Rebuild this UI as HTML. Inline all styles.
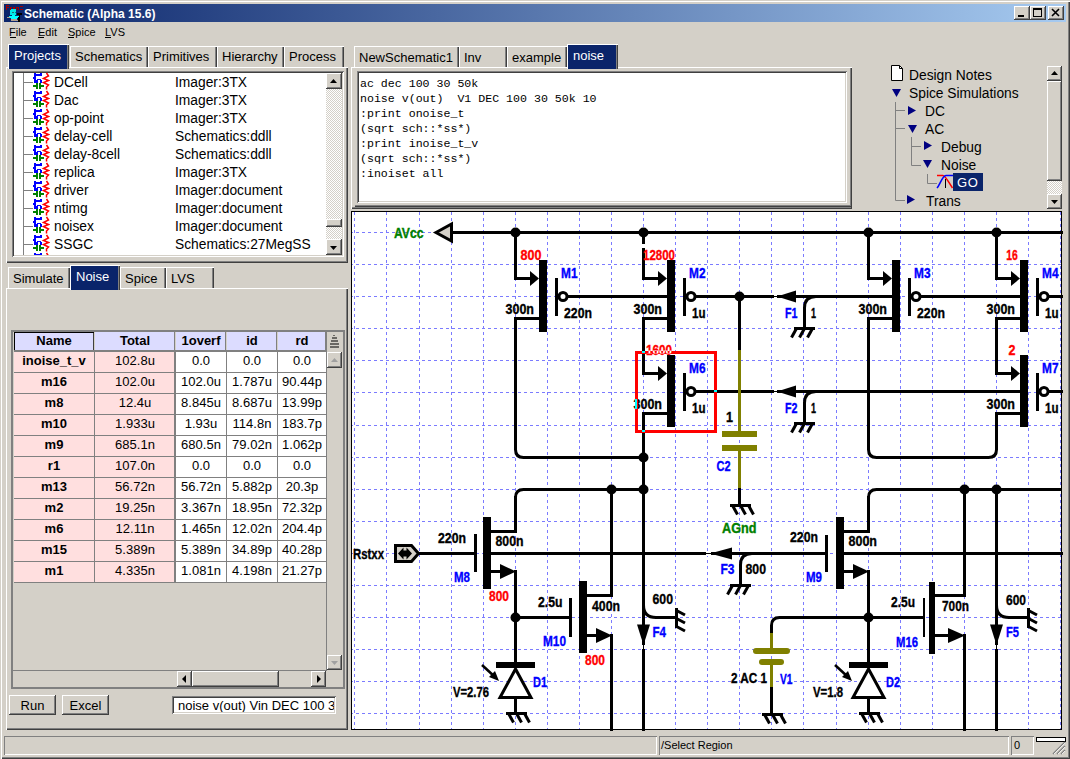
<!DOCTYPE html>
<html><head><meta charset="utf-8">
<style>
*{margin:0;padding:0;box-sizing:border-box;}
html,body{width:1070px;height:759px;overflow:hidden;background:#D4D0C8;font-family:"Liberation Sans",sans-serif;font-size:13px;color:#000;}
.a{position:absolute;}
.t{position:absolute;white-space:pre;line-height:1;}
.raised{background:#D4D0C8;box-shadow:inset -1px -1px #404040,inset 1px 1px #fff,inset -2px -2px #808080,inset 2px 2px #D4D0C8;}
.sunken{box-shadow:inset 1px 1px #808080,inset -1px -1px #fff,inset 2px 2px #404040,inset -2px -2px #D4D0C8;}
.thin-sunken{box-shadow:inset 1px 1px #808080,inset -1px -1px #fff;}
.panel{box-shadow:inset 1px 1px #fff,inset -1px -1px #404040,inset -2px -2px #808080;}
.tab{position:absolute;background:#D4D0C8;box-shadow:inset 1px 1px #fff,inset -1px 0 #404040,inset -2px 0 #808080;}
.tabsel{position:absolute;background:#0A246A;color:#fff;box-shadow:inset 1px 1px #fff,inset -1px 0 #404040,inset -2px 0 #808080;}
.check{background-color:#fff;background-image:linear-gradient(45deg,#D4D0C8 25%,transparent 25%,transparent 75%,#D4D0C8 75%),linear-gradient(45deg,#D4D0C8 25%,transparent 25%,transparent 75%,#D4D0C8 75%);background-size:2px 2px;background-position:0 0,1px 1px;}
</style></head><body>
<!-- window frame -->
<div class="a" style="left:0;top:0;width:1070px;height:759px;box-shadow:inset 1px 1px #D4D0C8,inset 2px 2px #fff,inset -1px -1px #404040,inset -2px -2px #808080;"></div>
<!-- title bar -->
<div class="a" style="left:4px;top:4px;width:1062px;height:18px;background:linear-gradient(to right,#0A246A,#A6CAF0);"></div>
<div class="t" style="left:24px;top:8px;color:#fff;font-weight:bold;font-size:12px;">Schematic (Alpha 15.6)</div>
<!-- title buttons -->
<div class="a raised" style="left:1014px;top:6px;width:16px;height:14px;"></div>
<div class="a raised" style="left:1030px;top:6px;width:16px;height:14px;"></div>
<div class="a raised" style="left:1048px;top:6px;width:16px;height:14px;"></div>

<!-- menu -->
<div class="t" style="left:9px;top:27px;font-size:11px;">File</div>
<div class="t" style="left:38px;top:27px;font-size:11px;">Edit</div>
<div class="t" style="left:68px;top:27px;font-size:11px;">Spice</div>
<div class="t" style="left:105px;top:27px;font-size:11px;">LVS</div>
<div class="a" style="left:10px;top:37px;width:6px;height:1px;background:#000"></div><div class="a" style="left:38px;top:37px;width:6px;height:1px;background:#000"></div><div class="a" style="left:68px;top:37px;width:6px;height:1px;background:#000"></div><div class="a" style="left:105px;top:37px;width:6px;height:1px;background:#000"></div>

<svg width="0" height="0" style="position:absolute"><defs><g id="ticon">
<path d="M2 1h2v1H2z M8 1h2v1H8z M2 2h8v2H2z M2 4h2v7H2z M1 5h1v2H1z M5 7h4v1H5z M4 8h2v3H4z M8 8h2v3H8z" fill="#0000FF" shape-rendering="crispEdges"/>
<path d="M1 13h3v2H1z M4 11h2v6H4z M7 11h2v6H7z M9 13h3v2H9z" fill="#008000" shape-rendering="crispEdges"/>
<path d="M14.5 1 L16.5 4 L11.5 6.5 L16.5 8.5 L11.5 10.5 L16.5 13 L14.5 15 V17.5" stroke="#FF0000" stroke-width="1.5" fill="none"/>
</g></defs></svg>
<!-- projects tabs -->
<div class="a panel" style="left:6px;top:67px;width:342px;height:196px;"></div>
<div class="tabsel" style="left:8px;top:44px;width:61px;height:25px;"></div><div class="t" style="left:14px;top:49px;color:#fff;">Projects</div>
<div class="tab" style="left:70px;top:46px;width:78px;height:21px;"></div><div class="t" style="left:75px;top:50px;">Schematics</div>
<div class="tab" style="left:148px;top:46px;width:69px;height:21px;"></div><div class="t" style="left:153px;top:50px;">Primitives</div>
<div class="tab" style="left:217px;top:46px;width:67px;height:21px;"></div><div class="t" style="left:222px;top:50px;">Hierarchy</div>
<div class="tab" style="left:284px;top:46px;width:60px;height:21px;"></div><div class="t" style="left:289px;top:50px;">Process</div>
<div class="a sunken" style="left:12px;top:71px;width:332px;height:186px;background:#fff;"></div>
<div class="a" style="left:23px;top:73px;width:1px;height:182px;background:#808080;"></div>
<div class="a" style="left:24px;top:82px;width:9px;height:1px;background:#808080;"></div>
<svg class="a" style="left:32px;top:72px;" width="18" height="18"><use href="#ticon"/></svg>
<div class="t" style="left:54px;top:76.2px;font-size:13.8px;">DCell</div><div class="t" style="left:175px;top:76.2px;font-size:13.8px;">Imager:3TX</div>
<div class="a" style="left:24px;top:100px;width:9px;height:1px;background:#808080;"></div>
<svg class="a" style="left:32px;top:90px;" width="18" height="18"><use href="#ticon"/></svg>
<div class="t" style="left:54px;top:94.2px;font-size:13.8px;">Dac</div><div class="t" style="left:175px;top:94.2px;font-size:13.8px;">Imager:3TX</div>
<div class="a" style="left:24px;top:118px;width:9px;height:1px;background:#808080;"></div>
<svg class="a" style="left:32px;top:108px;" width="18" height="18"><use href="#ticon"/></svg>
<div class="t" style="left:54px;top:112.2px;font-size:13.8px;">op-point</div><div class="t" style="left:175px;top:112.2px;font-size:13.8px;">Imager:3TX</div>
<div class="a" style="left:24px;top:136px;width:9px;height:1px;background:#808080;"></div>
<svg class="a" style="left:32px;top:126px;" width="18" height="18"><use href="#ticon"/></svg>
<div class="t" style="left:54px;top:130.2px;font-size:13.8px;">delay-cell</div><div class="t" style="left:175px;top:130.2px;font-size:13.8px;">Schematics:ddll</div>
<div class="a" style="left:24px;top:154px;width:9px;height:1px;background:#808080;"></div>
<svg class="a" style="left:32px;top:144px;" width="18" height="18"><use href="#ticon"/></svg>
<div class="t" style="left:54px;top:148.2px;font-size:13.8px;">delay-8cell</div><div class="t" style="left:175px;top:148.2px;font-size:13.8px;">Schematics:ddll</div>
<div class="a" style="left:24px;top:172px;width:9px;height:1px;background:#808080;"></div>
<svg class="a" style="left:32px;top:162px;" width="18" height="18"><use href="#ticon"/></svg>
<div class="t" style="left:54px;top:166.2px;font-size:13.8px;">replica</div><div class="t" style="left:175px;top:166.2px;font-size:13.8px;">Imager:3TX</div>
<div class="a" style="left:24px;top:190px;width:9px;height:1px;background:#808080;"></div>
<svg class="a" style="left:32px;top:180px;" width="18" height="18"><use href="#ticon"/></svg>
<div class="t" style="left:54px;top:184.2px;font-size:13.8px;">driver</div><div class="t" style="left:175px;top:184.2px;font-size:13.8px;">Imager:document</div>
<div class="a" style="left:24px;top:208px;width:9px;height:1px;background:#808080;"></div>
<svg class="a" style="left:32px;top:198px;" width="18" height="18"><use href="#ticon"/></svg>
<div class="t" style="left:54px;top:202.2px;font-size:13.8px;">ntimg</div><div class="t" style="left:175px;top:202.2px;font-size:13.8px;">Imager:document</div>
<div class="a" style="left:24px;top:226px;width:9px;height:1px;background:#808080;"></div>
<svg class="a" style="left:32px;top:216px;" width="18" height="18"><use href="#ticon"/></svg>
<div class="t" style="left:54px;top:220.2px;font-size:13.8px;">noisex</div><div class="t" style="left:175px;top:220.2px;font-size:13.8px;">Imager:document</div>
<div class="a" style="left:24px;top:244px;width:9px;height:1px;background:#808080;"></div>
<svg class="a" style="left:32px;top:234px;" width="18" height="18"><use href="#ticon"/></svg>
<div class="t" style="left:54px;top:238.2px;font-size:13.8px;">SSGC</div><div class="t" style="left:175px;top:238.2px;font-size:13.8px;">Schematics:27MegSS</div>
<svg class="a" style="left:32px;top:252px;" width="18" height="3"><use href="#ticon"/></svg>
<div class="a check" style="left:326px;top:73px;width:16px;height:182px;"></div>
<div class="a raised" style="left:326px;top:73px;width:16px;height:16px;"></div><svg class="a" style="left:326px;top:73px" width="16" height="16"><path d="M4 10h7l-3.5-4z" fill="#000"/></svg>
<div class="a raised" style="left:326px;top:219px;width:16px;height:8px;"></div>
<div class="a raised" style="left:326px;top:239px;width:16px;height:16px;"></div><svg class="a" style="left:326px;top:239px" width="16" height="16"><path d="M4 7h7l-3.5 4z" fill="#000"/></svg>
<!-- lower tabs -->
<div class="a panel" style="left:6px;top:288px;width:342px;height:442px;"></div>
<div class="tab" style="left:8px;top:267px;width:62px;height:21px;"></div><div class="t" style="left:13px;top:272px;">Simulate</div>
<div class="tabsel" style="left:70px;top:265px;width:50px;height:25px;"></div><div class="t" style="left:76px;top:270px;color:#fff;">Noise</div>
<div class="tab" style="left:120px;top:267px;width:46px;height:21px;"></div><div class="t" style="left:125px;top:272px;">Spice</div>
<div class="tab" style="left:166px;top:267px;width:48px;height:21px;"></div><div class="t" style="left:171px;top:272px;">LVS</div>
<div class="a" style="left:11px;top:330px;width:334px;height:359px;background:#D4D0C8;box-shadow:inset 2px 2px #808080,inset -2px -2px #808080;"></div>
<div class="a" style="left:14px;top:332px;width:80px;height:18px;background:#DCDCFF;box-shadow:inset 1px 1px #000,inset -1px 0 #404040;"></div>
<div class="t" style="left:14px;top:333.5px;width:80px;text-align:center;font-weight:bold;">Name</div>
<div class="a" style="left:95px;top:332px;width:80px;height:18px;background:#DCDCFF;box-shadow:inset -1px 0 #808080;"></div>
<div class="t" style="left:95px;top:333.5px;width:80px;text-align:center;font-weight:bold;">Total</div>
<div class="a" style="left:176px;top:332px;width:50px;height:18px;background:#DCDCFF;box-shadow:inset -1px 0 #808080;"></div>
<div class="t" style="left:176px;top:333.5px;width:50px;text-align:center;font-weight:bold;">1overf</div>
<div class="a" style="left:227px;top:332px;width:50px;height:18px;background:#DCDCFF;box-shadow:inset -1px 0 #808080;"></div>
<div class="t" style="left:227px;top:333.5px;width:50px;text-align:center;font-weight:bold;">id</div>
<div class="a" style="left:278px;top:332px;width:48px;height:18px;background:#DCDCFF;box-shadow:inset -1px 0 #808080;"></div>
<div class="t" style="left:278px;top:333.5px;width:48px;text-align:center;font-weight:bold;">rd</div>
<div class="a" style="left:14px;top:350px;width:312px;height:2px;background:#808080;"></div>
<div class="a" style="left:14px;top:352px;width:161px;height:20px;background:#FFDFDF;"></div>
<div class="a" style="left:175px;top:352px;width:151px;height:20px;background:#fff;"></div>
<div class="a" style="left:14px;top:372px;width:312px;height:1px;background:#808080;"></div>
<div class="t" style="left:14px;top:354px;width:80px;text-align:center;font-weight:bold;">inoise_t_v</div>
<div class="t" style="left:95px;top:354px;width:80px;text-align:center;">102.8u</div>
<div class="t" style="left:176px;top:354px;width:50px;text-align:center;">0.0</div>
<div class="t" style="left:227px;top:354px;width:50px;text-align:center;">0.0</div>
<div class="t" style="left:278px;top:354px;width:48px;text-align:center;">0.0</div>
<div class="a" style="left:14px;top:373px;width:161px;height:20px;background:#FFDFDF;"></div>
<div class="a" style="left:175px;top:373px;width:151px;height:20px;background:#fff;"></div>
<div class="a" style="left:14px;top:393px;width:312px;height:1px;background:#808080;"></div>
<div class="t" style="left:14px;top:375px;width:80px;text-align:center;font-weight:bold;">m16</div>
<div class="t" style="left:95px;top:375px;width:80px;text-align:center;">102.0u</div>
<div class="t" style="left:176px;top:375px;width:50px;text-align:center;">102.0u</div>
<div class="t" style="left:227px;top:375px;width:50px;text-align:center;">1.787u</div>
<div class="t" style="left:278px;top:375px;width:48px;text-align:center;">90.44p</div>
<div class="a" style="left:14px;top:394px;width:161px;height:20px;background:#FFDFDF;"></div>
<div class="a" style="left:175px;top:394px;width:151px;height:20px;background:#fff;"></div>
<div class="a" style="left:14px;top:414px;width:312px;height:1px;background:#808080;"></div>
<div class="t" style="left:14px;top:396px;width:80px;text-align:center;font-weight:bold;">m8</div>
<div class="t" style="left:95px;top:396px;width:80px;text-align:center;">12.4u</div>
<div class="t" style="left:176px;top:396px;width:50px;text-align:center;">8.845u</div>
<div class="t" style="left:227px;top:396px;width:50px;text-align:center;">8.687u</div>
<div class="t" style="left:278px;top:396px;width:48px;text-align:center;">13.99p</div>
<div class="a" style="left:14px;top:415px;width:161px;height:20px;background:#FFDFDF;"></div>
<div class="a" style="left:175px;top:415px;width:151px;height:20px;background:#fff;"></div>
<div class="a" style="left:14px;top:435px;width:312px;height:1px;background:#808080;"></div>
<div class="t" style="left:14px;top:417px;width:80px;text-align:center;font-weight:bold;">m10</div>
<div class="t" style="left:95px;top:417px;width:80px;text-align:center;">1.933u</div>
<div class="t" style="left:176px;top:417px;width:50px;text-align:center;">1.93u</div>
<div class="t" style="left:227px;top:417px;width:50px;text-align:center;">114.8n</div>
<div class="t" style="left:278px;top:417px;width:48px;text-align:center;">183.7p</div>
<div class="a" style="left:14px;top:436px;width:161px;height:20px;background:#FFDFDF;"></div>
<div class="a" style="left:175px;top:436px;width:151px;height:20px;background:#fff;"></div>
<div class="a" style="left:14px;top:456px;width:312px;height:1px;background:#808080;"></div>
<div class="t" style="left:14px;top:438px;width:80px;text-align:center;font-weight:bold;">m9</div>
<div class="t" style="left:95px;top:438px;width:80px;text-align:center;">685.1n</div>
<div class="t" style="left:176px;top:438px;width:50px;text-align:center;">680.5n</div>
<div class="t" style="left:227px;top:438px;width:50px;text-align:center;">79.02n</div>
<div class="t" style="left:278px;top:438px;width:48px;text-align:center;">1.062p</div>
<div class="a" style="left:14px;top:457px;width:161px;height:20px;background:#FFDFDF;"></div>
<div class="a" style="left:175px;top:457px;width:151px;height:20px;background:#fff;"></div>
<div class="a" style="left:14px;top:477px;width:312px;height:1px;background:#808080;"></div>
<div class="t" style="left:14px;top:459px;width:80px;text-align:center;font-weight:bold;">r1</div>
<div class="t" style="left:95px;top:459px;width:80px;text-align:center;">107.0n</div>
<div class="t" style="left:176px;top:459px;width:50px;text-align:center;">0.0</div>
<div class="t" style="left:227px;top:459px;width:50px;text-align:center;">0.0</div>
<div class="t" style="left:278px;top:459px;width:48px;text-align:center;">0.0</div>
<div class="a" style="left:14px;top:478px;width:161px;height:20px;background:#FFDFDF;"></div>
<div class="a" style="left:175px;top:478px;width:151px;height:20px;background:#fff;"></div>
<div class="a" style="left:14px;top:498px;width:312px;height:1px;background:#808080;"></div>
<div class="t" style="left:14px;top:480px;width:80px;text-align:center;font-weight:bold;">m13</div>
<div class="t" style="left:95px;top:480px;width:80px;text-align:center;">56.72n</div>
<div class="t" style="left:176px;top:480px;width:50px;text-align:center;">56.72n</div>
<div class="t" style="left:227px;top:480px;width:50px;text-align:center;">5.882p</div>
<div class="t" style="left:278px;top:480px;width:48px;text-align:center;">20.3p</div>
<div class="a" style="left:14px;top:499px;width:161px;height:20px;background:#FFDFDF;"></div>
<div class="a" style="left:175px;top:499px;width:151px;height:20px;background:#fff;"></div>
<div class="a" style="left:14px;top:519px;width:312px;height:1px;background:#808080;"></div>
<div class="t" style="left:14px;top:501px;width:80px;text-align:center;font-weight:bold;">m2</div>
<div class="t" style="left:95px;top:501px;width:80px;text-align:center;">19.25n</div>
<div class="t" style="left:176px;top:501px;width:50px;text-align:center;">3.367n</div>
<div class="t" style="left:227px;top:501px;width:50px;text-align:center;">18.95n</div>
<div class="t" style="left:278px;top:501px;width:48px;text-align:center;">72.32p</div>
<div class="a" style="left:14px;top:520px;width:161px;height:20px;background:#FFDFDF;"></div>
<div class="a" style="left:175px;top:520px;width:151px;height:20px;background:#fff;"></div>
<div class="a" style="left:14px;top:540px;width:312px;height:1px;background:#808080;"></div>
<div class="t" style="left:14px;top:522px;width:80px;text-align:center;font-weight:bold;">m6</div>
<div class="t" style="left:95px;top:522px;width:80px;text-align:center;">12.11n</div>
<div class="t" style="left:176px;top:522px;width:50px;text-align:center;">1.465n</div>
<div class="t" style="left:227px;top:522px;width:50px;text-align:center;">12.02n</div>
<div class="t" style="left:278px;top:522px;width:48px;text-align:center;">204.4p</div>
<div class="a" style="left:14px;top:541px;width:161px;height:20px;background:#FFDFDF;"></div>
<div class="a" style="left:175px;top:541px;width:151px;height:20px;background:#fff;"></div>
<div class="a" style="left:14px;top:561px;width:312px;height:1px;background:#808080;"></div>
<div class="t" style="left:14px;top:543px;width:80px;text-align:center;font-weight:bold;">m15</div>
<div class="t" style="left:95px;top:543px;width:80px;text-align:center;">5.389n</div>
<div class="t" style="left:176px;top:543px;width:50px;text-align:center;">5.389n</div>
<div class="t" style="left:227px;top:543px;width:50px;text-align:center;">34.89p</div>
<div class="t" style="left:278px;top:543px;width:48px;text-align:center;">40.28p</div>
<div class="a" style="left:14px;top:562px;width:161px;height:20px;background:#FFDFDF;"></div>
<div class="a" style="left:175px;top:562px;width:151px;height:20px;background:#fff;"></div>
<div class="a" style="left:14px;top:582px;width:312px;height:1px;background:#808080;"></div>
<div class="t" style="left:14px;top:564px;width:80px;text-align:center;font-weight:bold;">m1</div>
<div class="t" style="left:95px;top:564px;width:80px;text-align:center;">4.335n</div>
<div class="t" style="left:176px;top:564px;width:50px;text-align:center;">1.081n</div>
<div class="t" style="left:227px;top:564px;width:50px;text-align:center;">4.198n</div>
<div class="t" style="left:278px;top:564px;width:48px;text-align:center;">21.27p</div>
<div class="a" style="left:94px;top:352px;width:1px;height:230px;background:#808080;"></div>
<div class="a" style="left:174px;top:352px;width:1px;height:230px;background:#808080;"></div>
<div class="a" style="left:175px;top:352px;width:1px;height:230px;background:#808080;"></div>
<div class="a" style="left:226px;top:352px;width:1px;height:230px;background:#808080;"></div>
<div class="a" style="left:277px;top:352px;width:1px;height:230px;background:#808080;"></div>
<div class="a" style="left:326px;top:352px;width:1px;height:230px;background:#808080;"></div>
<div class="a" style="left:326px;top:332px;width:16px;height:339px;background:#D4D0C8;"></div>
<div class="a" style="left:326px;top:332px;width:1px;height:339px;background:#808080;"></div>
<svg class="a" style="left:327px;top:332px" width="15" height="18"><path d="M7 3v1M5 6h5M4 9h7M3 12h9M3 15h9" stroke="#000" stroke-width="1"/></svg>
<div class="a raised" style="left:327px;top:352px;width:15px;height:16px;"></div><svg class="a" style="left:327px;top:352px" width="15" height="16"><path d="M4 10h7l-3.5-4z" fill="#A0A0A0"/></svg>
<div class="a raised" style="left:327px;top:655px;width:15px;height:15px;"></div><svg class="a" style="left:327px;top:655px" width="15" height="15"><path d="M4 6h7l-3.5 4z" fill="#A0A0A0"/></svg>
<div class="a" style="left:13px;top:670px;width:314px;height:1px;background:#808080;"></div>
<div class="a raised" style="left:177px;top:671px;width:15px;height:16px;"></div><svg class="a" style="left:177px;top:671px" width="15" height="16"><path d="M9 4v8l-4-4z" fill="#000"/></svg>
<div class="a raised" style="left:192px;top:671px;width:87px;height:16px;"></div>
<div class="a raised" style="left:311px;top:671px;width:15px;height:16px;"></div><svg class="a" style="left:311px;top:671px" width="15" height="16"><path d="M6 4v8l4-4z" fill="#000"/></svg>
<div class="a raised" style="left:9px;top:695px;width:47px;height:20px;"></div><div class="t" style="left:9px;top:699px;width:47px;text-align:center;">Run</div>
<div class="a raised" style="left:62px;top:695px;width:47px;height:20px;"></div><div class="t" style="left:62px;top:699px;width:47px;text-align:center;">Excel</div>
<div class="a sunken" style="left:172px;top:696px;width:164px;height:18px;background:#fff;overflow:hidden;"><div class="t" style="left:6px;top:3px;">noise v(out) Vin DEC 100 3</div></div>
<div class="a sunken" style="left:172px;top:696px;width:164px;height:18px;"></div>
<svg class="a" style="left:4px;top:2px" width="20" height="20" shape-rendering="crispEdges">
<path d="M2 3h3v1H3v1h2v1H3v2H2z M6 5h1v3H6z M7 5h1v1H7z M9 5h2v3H9z M12 5h3v3h-1V6h-1v2h-1z M16 4h3v1h-1v1h-1v1h2v1h-3V7h1V6h1V5h-2z" fill="#A00000"/>
<path d="M7 7h5v1H7z M6 8h2v5H6z M8 8h4v5H8z" fill="#00E8E8"/>
<path d="M8 10h2v1H8z M11 10h1v1h-1z" fill="#207070"/>
<path d="M8 13h3v1H8z M5 14h10v2H5z M7 16h6v1H7z" fill="#00FFFF"/>
<path d="M3 15h3v1H3z M7 17h6v1H7z M7 18h7v1H7z" fill="#B0A090"/>
<path d="M13 11h5v2h-2v7h-2v-5h1v-2h-2z" fill="#000"/>
</svg>
<svg class="a" style="left:1014px;top:6px" width="50" height="14"><path d="M4 9h6v2H4z" fill="#000"/><path d="M19 2h9v9h-9z M20 4v6h7V4z" fill="#000" fill-rule="evenodd"/><path d="M38 3l7 7M45 3l-7 7" stroke="#000" stroke-width="1.6"/></svg>
<!-- right tabs -->
<div class="a" style="left:351px;top:67px;width:501px;height:142px;box-shadow:inset 1px 1px #fff,inset -1px -1px #404040,inset -2px -2px #808080;"></div>
<div class="tab" style="left:354px;top:46px;width:105px;height:21px;"></div><div class="t" style="left:359px;top:51px;">NewSchematic1</div>
<div class="tab" style="left:459px;top:46px;width:48px;height:21px;"></div><div class="t" style="left:464px;top:51px;">Inv</div>
<div class="tab" style="left:507px;top:46px;width:60px;height:21px;"></div><div class="t" style="left:512px;top:51px;">example</div>
<div class="tabsel" style="left:567px;top:44px;width:51px;height:25px;"></div><div class="t" style="left:573px;top:49px;color:#fff;">noise</div>
<div class="a sunken" style="left:357px;top:71px;width:490px;height:132px;background:#fff;"></div>
<div class="a" style="left:355px;top:69px;width:497px;height:138px;box-shadow:inset -1px -1px #404040,inset -2px -2px #808080;"></div>
<div class="t" style="left:360px;top:78px;font-family:'Liberation Mono',monospace;font-size:11.6px;">ac dec 100 30 50k</div>
<div class="t" style="left:360px;top:93px;font-family:'Liberation Mono',monospace;font-size:11.6px;">noise v(out)  V1 DEC 100 30 50k 10</div>
<div class="t" style="left:360px;top:108px;font-family:'Liberation Mono',monospace;font-size:11.6px;">:print onoise_t</div>
<div class="t" style="left:360px;top:123px;font-family:'Liberation Mono',monospace;font-size:11.6px;">(sqrt sch::*ss*)</div>
<div class="t" style="left:360px;top:138px;font-family:'Liberation Mono',monospace;font-size:11.6px;">:print inoise_t_v</div>
<div class="t" style="left:360px;top:153px;font-family:'Liberation Mono',monospace;font-size:11.6px;">(sqrt sch::*ss*)</div>
<div class="t" style="left:360px;top:168px;font-family:'Liberation Mono',monospace;font-size:11.6px;">:inoiset all</div>
<div class="t" style="left:909px;top:68px;font-size:13.8px;margin-top:0.6px;">Design Notes</div>
<div class="t" style="left:909px;top:86px;font-size:13.8px;margin-top:0.6px;">Spice Simulations</div>
<div class="t" style="left:925px;top:104px;font-size:13.8px;margin-top:0.6px;">DC</div>
<div class="t" style="left:925px;top:122px;font-size:13.8px;margin-top:0.6px;">AC</div>
<div class="t" style="left:941px;top:140px;font-size:13.8px;margin-top:0.6px;">Debug</div>
<div class="t" style="left:941px;top:158px;font-size:13.8px;margin-top:0.6px;">Noise</div>
<div class="a" style="left:953px;top:173px;width:30px;height:18px;background:#0A246A;"></div><div class="t" style="left:957px;top:176px;color:#fff;letter-spacing:0.6px;">GO</div>
<div class="t" style="left:926px;top:194px;font-size:13.8px;margin-top:0.6px;">Trans</div>
<svg class="a" style="left:880px;top:60px" width="110" height="150">
<path d="M11.5 5.5h8l3 3v12h-11z" fill="#fff" stroke="#000"/><path d="M19.5 5.5v3h3" fill="none" stroke="#000"/>
<path d="M12 29h9l-4.5 8z" fill="#000080"/>
<path d="M15.5 42v98.5H25 M15.5 50.5H25 M15.5 68.5H25" fill="none" stroke="#808080"/>
<path d="M28 46v9l8-4.5z" fill="#000080"/>
<path d="M28 65h9l-4.5 8z" fill="#000080"/>
<path d="M27 135v9l8-4.5z" fill="#000080"/>
<path d="M31.5 77v28.5H41 M31.5 86.5H41" fill="none" stroke="#808080"/>
<path d="M44 81v9l8-4.5z" fill="#000080"/>
<path d="M43 100h9l-4.5 8z" fill="#000080"/>
<path d="M47.5 114v9.5H57" fill="none" stroke="#808080"/>
<path d="M57 115.5h6c2 0 6 7 9.5 12.5" fill="none" stroke="#FF0000" stroke-width="1.6"/>
<path d="M57 128c3-3 5-12 9-12.5h7" fill="none" stroke="#0000FF" stroke-width="1.6"/>
<path d="M65.5 119v9" stroke="#000" stroke-width="1"/>
</svg>
<div class="a check" style="left:1047px;top:66px;width:15px;height:143px;"></div>
<div class="a raised" style="left:1047px;top:66px;width:15px;height:15px;"></div><svg class="a" style="left:1047px;top:66px" width="15" height="15"><path d="M4 9h7l-3.5-4z" fill="#000"/></svg>
<div class="a raised" style="left:1047px;top:81px;width:15px;height:100px;"></div>
<div class="a raised" style="left:1047px;top:194px;width:15px;height:15px;"></div><svg class="a" style="left:1047px;top:194px" width="15" height="15"><path d="M4 6h7l-3.5 4z" fill="#000"/></svg>
<div class="a" style="left:351px;top:211px;width:711px;height:519px;background:#fff;border:1px solid #000;"></div>
<svg id="sch" class="a" style="left:0;top:0" width="1070" height="759" font-family="Liberation Sans, sans-serif"><g><path d="M354.5 212V729 M386.5 212V729 M419.5 212V729 M451.5 212V729 M483.5 212V729 M515.5 212V729 M547.5 212V729 M579.5 212V729 M611.5 212V729 M643.5 212V729 M675.5 212V729 M707.5 212V729 M739.5 212V729 M771.5 212V729 M803.5 212V729 M836.5 212V729 M868.5 212V729 M900.5 212V729 M932.5 212V729 M964.5 212V729 M996.5 212V729 M1028.5 212V729 M1060.5 212V729" stroke="#7B7BFF" stroke-width="1" stroke-dasharray="3 3" fill="none" shape-rendering="crispEdges"/>
<path d="M352 232.5H1061 M352 264.5H1061 M352 296.5H1061 M352 328.5H1061 M352 360.5H1061 M352 392.5H1061 M352 425.5H1061 M352 457.5H1061 M352 489.5H1061 M352 521.5H1061 M352 553.5H1061 M352 585.5H1061 M352 617.5H1061 M352 649.5H1061 M352 681.5H1061 M352 713.5H1061" stroke="#7B7BFF" stroke-width="1" stroke-dasharray="3 3" stroke-dashoffset="2" fill="none" shape-rendering="crispEdges"/>
<path d="M452.5 232.5 L1061.5 232.5" stroke="#000" stroke-width="3" fill="none" stroke-linecap="square" shape-rendering="crispEdges"/>
<path d="M436 232.5 L451.5 224 L451.5 241 Z" fill="#D4D0C8" stroke="#000" stroke-width="3" stroke-linejoin="miter"/>
<text x="394" y="238" fill="#008000" stroke="#008000" stroke-width="0.35" font-weight="bold" font-size="14.5" textLength="29.5" lengthAdjust="spacingAndGlyphs">AVcc</text>
<path d="M515.5 232.5 L515.5 278.5" stroke="#000" stroke-width="3" fill="none" stroke-linecap="square" shape-rendering="crispEdges"/>
<path d="M515.5 318.5 L515.5 449.5 Q515.5 457.5 523.5 457.5 L643.5 457.5" stroke="#000" stroke-width="3" fill="none"/>
<path d="M567.5 296.5 L667.5 296.5" stroke="#000" stroke-width="3" fill="none" stroke-linecap="square" shape-rendering="crispEdges"/>
<path d="M643.5 232.5 L643.5 278.5" stroke="#000" stroke-width="3" fill="none" stroke-linecap="square" shape-rendering="crispEdges"/>
<rect x="641" y="244" width="5" height="4" fill="#fff" shape-rendering="crispEdges"/>
<path d="M643.5 318.5 L643.5 373.5" stroke="#000" stroke-width="3" fill="none" stroke-linecap="square" shape-rendering="crispEdges"/>
<path d="M695.5 296.5 L892.5 296.5" stroke="#000" stroke-width="3" fill="none" stroke-linecap="square" shape-rendering="crispEdges"/>
<path d="M868.5 232.5 L868.5 278.5" stroke="#000" stroke-width="3" fill="none" stroke-linecap="square" shape-rendering="crispEdges"/>
<path d="M868.5 318.5 L868.5 449.5 Q868.5 457.5 876.5 457.5 L988.5 457.5 Q996.5 457.5 996.5 449.5 L996.5 413.5" stroke="#000" stroke-width="3" fill="none"/>
<path d="M920.5 296.5 L1020.5 296.5" stroke="#000" stroke-width="3" fill="none" stroke-linecap="square" shape-rendering="crispEdges"/>
<path d="M996.5 232.5 L996.5 278.5" stroke="#000" stroke-width="3" fill="none" stroke-linecap="square" shape-rendering="crispEdges"/>
<path d="M996.5 318.5 L996.5 373.5" stroke="#000" stroke-width="3" fill="none" stroke-linecap="square" shape-rendering="crispEdges"/>
<path d="M1048.5 296.5 L1061.5 296.5" stroke="#000" stroke-width="3" fill="none" stroke-linecap="square" shape-rendering="crispEdges"/>
<path d="M643.5 413.5 L643.5 729.5" stroke="#000" stroke-width="3" fill="none" stroke-linecap="square" shape-rendering="crispEdges"/>
<path d="M695.5 391.5 L1020.5 391.5" stroke="#000" stroke-width="3" fill="none" stroke-linecap="square" shape-rendering="crispEdges"/>
<path d="M1020.5 413.5 L996.5 413.5" stroke="#000" stroke-width="3" fill="none" stroke-linecap="square" shape-rendering="crispEdges"/>
<path d="M1048.5 391.5 L1061.5 391.5" stroke="#000" stroke-width="3" fill="none" stroke-linecap="square" shape-rendering="crispEdges"/>
<circle cx="515.5" cy="232.5" r="5" fill="#000"/>
<circle cx="643.5" cy="232.5" r="5" fill="#000"/>
<circle cx="868.5" cy="232.5" r="5" fill="#000"/>
<circle cx="996.5" cy="232.5" r="5" fill="#000"/>
<circle cx="739.5" cy="296.5" r="5" fill="#000"/>
<path d="M515.5 278.5 L530.5 278.5" stroke="#000" stroke-width="3" fill="none" stroke-linecap="square" shape-rendering="crispEdges"/>
<path d="M530 271 L530 286 L539 278.5 Z" fill="#000"/>
<path d="M539.5 318.5 L515.5 318.5" stroke="#000" stroke-width="3" fill="none" stroke-linecap="square" shape-rendering="crispEdges"/>
<rect x="539" y="260" width="8" height="72" fill="#000" shape-rendering="crispEdges"/>
<rect x="555" y="278" width="3" height="38" fill="#000" shape-rendering="crispEdges"/>
<circle cx="563" cy="296.5" r="4" fill="#fff" stroke="#000" stroke-width="3"/>
<text x="520.5" y="259.5" fill="#FF0000" stroke="#FF0000" stroke-width="0.35" font-weight="bold" font-size="14.5" textLength="21" lengthAdjust="spacingAndGlyphs">800</text>
<text x="561" y="277.5" fill="#0000FF" stroke="#0000FF" stroke-width="0.35" font-weight="bold" font-size="14.5" textLength="16.5" lengthAdjust="spacingAndGlyphs">M1</text>
<text x="505.5" y="314" fill="#000" stroke="#000" stroke-width="0.35" font-weight="bold" font-size="14.5" textLength="28.5" lengthAdjust="spacingAndGlyphs">300n</text>
<text x="564" y="317.5" fill="#000" stroke="#000" stroke-width="0.35" font-weight="bold" font-size="14.5" textLength="28" lengthAdjust="spacingAndGlyphs">220n</text>
<path d="M643.5 278.5 L658.5 278.5" stroke="#000" stroke-width="3" fill="none" stroke-linecap="square" shape-rendering="crispEdges"/>
<path d="M658 271 L658 286 L667 278.5 Z" fill="#000"/>
<path d="M667.5 318.5 L643.5 318.5" stroke="#000" stroke-width="3" fill="none" stroke-linecap="square" shape-rendering="crispEdges"/>
<rect x="667" y="260" width="8" height="72" fill="#000" shape-rendering="crispEdges"/>
<rect x="683" y="278" width="3" height="38" fill="#000" shape-rendering="crispEdges"/>
<circle cx="691" cy="296.5" r="4" fill="#fff" stroke="#000" stroke-width="3"/>
<text x="643.0" y="259.5" fill="#FF0000" stroke="#FF0000" stroke-width="0.35" font-weight="bold" font-size="14.5" textLength="32" lengthAdjust="spacingAndGlyphs">12800</text>
<text x="689" y="277.5" fill="#0000FF" stroke="#0000FF" stroke-width="0.35" font-weight="bold" font-size="14.5" textLength="16.5" lengthAdjust="spacingAndGlyphs">M2</text>
<text x="633.5" y="314" fill="#000" stroke="#000" stroke-width="0.35" font-weight="bold" font-size="14.5" textLength="28.5" lengthAdjust="spacingAndGlyphs">300n</text>
<text x="692" y="317.5" fill="#000" stroke="#000" stroke-width="0.35" font-weight="bold" font-size="14.5" textLength="13.5" lengthAdjust="spacingAndGlyphs">1u</text>
<path d="M868.5 278.5 L883.5 278.5" stroke="#000" stroke-width="3" fill="none" stroke-linecap="square" shape-rendering="crispEdges"/>
<path d="M883 271 L883 286 L892 278.5 Z" fill="#000"/>
<path d="M892.5 318.5 L868.5 318.5" stroke="#000" stroke-width="3" fill="none" stroke-linecap="square" shape-rendering="crispEdges"/>
<rect x="892" y="260" width="8" height="72" fill="#000" shape-rendering="crispEdges"/>
<rect x="908" y="278" width="3" height="38" fill="#000" shape-rendering="crispEdges"/>
<circle cx="916" cy="296.5" r="4" fill="#fff" stroke="#000" stroke-width="3"/>
<text x="884.0" y="259.5" fill="#FF0000" stroke="#FF0000" stroke-width="0.35" font-weight="bold" font-size="14.5"></text>
<text x="914" y="277.5" fill="#0000FF" stroke="#0000FF" stroke-width="0.35" font-weight="bold" font-size="14.5" textLength="16.5" lengthAdjust="spacingAndGlyphs">M3</text>
<text x="858.5" y="314" fill="#000" stroke="#000" stroke-width="0.35" font-weight="bold" font-size="14.5" textLength="28.5" lengthAdjust="spacingAndGlyphs">300n</text>
<text x="917" y="317.5" fill="#000" stroke="#000" stroke-width="0.35" font-weight="bold" font-size="14.5" textLength="28" lengthAdjust="spacingAndGlyphs">220n</text>
<path d="M996.5 278.5 L1011.5 278.5" stroke="#000" stroke-width="3" fill="none" stroke-linecap="square" shape-rendering="crispEdges"/>
<path d="M1011 271 L1011 286 L1020 278.5 Z" fill="#000"/>
<path d="M1020.5 318.5 L996.5 318.5" stroke="#000" stroke-width="3" fill="none" stroke-linecap="square" shape-rendering="crispEdges"/>
<rect x="1020" y="260" width="8" height="72" fill="#000" shape-rendering="crispEdges"/>
<rect x="1036" y="278" width="3" height="38" fill="#000" shape-rendering="crispEdges"/>
<circle cx="1044" cy="296.5" r="4" fill="#fff" stroke="#000" stroke-width="3"/>
<text x="1006.25" y="259.5" fill="#FF0000" stroke="#FF0000" stroke-width="0.35" font-weight="bold" font-size="14.5" textLength="11.5" lengthAdjust="spacingAndGlyphs">16</text>
<text x="1042" y="277.5" fill="#0000FF" stroke="#0000FF" stroke-width="0.35" font-weight="bold" font-size="14.5" textLength="16.5" lengthAdjust="spacingAndGlyphs">M4</text>
<text x="986.5" y="314" fill="#000" stroke="#000" stroke-width="0.35" font-weight="bold" font-size="14.5" textLength="28.5" lengthAdjust="spacingAndGlyphs">300n</text>
<text x="1045" y="317.5" fill="#000" stroke="#000" stroke-width="0.35" font-weight="bold" font-size="14.5" textLength="13.5" lengthAdjust="spacingAndGlyphs">1u</text>
<path d="M643.5 373.5 L658.5 373.5" stroke="#000" stroke-width="3" fill="none" stroke-linecap="square" shape-rendering="crispEdges"/>
<path d="M658 366 L658 381 L667 373.5 Z" fill="#000"/>
<path d="M667.5 413.5 L643.5 413.5" stroke="#000" stroke-width="3" fill="none" stroke-linecap="square" shape-rendering="crispEdges"/>
<rect x="667" y="355" width="8" height="72" fill="#000" shape-rendering="crispEdges"/>
<rect x="683" y="373" width="3" height="38" fill="#000" shape-rendering="crispEdges"/>
<circle cx="691" cy="391.5" r="4" fill="#fff" stroke="#000" stroke-width="3"/>
<text x="646.0" y="354.5" fill="#FF0000" stroke="#FF0000" stroke-width="0.35" font-weight="bold" font-size="14.5" textLength="26" lengthAdjust="spacingAndGlyphs">1600</text>
<text x="689" y="372.5" fill="#0000FF" stroke="#0000FF" stroke-width="0.35" font-weight="bold" font-size="14.5" textLength="16.5" lengthAdjust="spacingAndGlyphs">M6</text>
<text x="633.5" y="409" fill="#000" stroke="#000" stroke-width="0.35" font-weight="bold" font-size="14.5" textLength="28.5" lengthAdjust="spacingAndGlyphs">300n</text>
<text x="692" y="412.5" fill="#000" stroke="#000" stroke-width="0.35" font-weight="bold" font-size="14.5" textLength="13.5" lengthAdjust="spacingAndGlyphs">1u</text>
<path d="M996.5 373.5 L1011.5 373.5" stroke="#000" stroke-width="3" fill="none" stroke-linecap="square" shape-rendering="crispEdges"/>
<path d="M1011 366 L1011 381 L1020 373.5 Z" fill="#000"/>
<path d="M1020.5 413.5 L996.5 413.5" stroke="#000" stroke-width="3" fill="none" stroke-linecap="square" shape-rendering="crispEdges"/>
<rect x="1020" y="355" width="8" height="72" fill="#000" shape-rendering="crispEdges"/>
<rect x="1036" y="373" width="3" height="38" fill="#000" shape-rendering="crispEdges"/>
<circle cx="1044" cy="391.5" r="4" fill="#fff" stroke="#000" stroke-width="3"/>
<text x="1008.5" y="354.5" fill="#FF0000" stroke="#FF0000" stroke-width="0.35" font-weight="bold" font-size="14.5" textLength="7" lengthAdjust="spacingAndGlyphs">2</text>
<text x="1042" y="372.5" fill="#0000FF" stroke="#0000FF" stroke-width="0.35" font-weight="bold" font-size="14.5" textLength="16.5" lengthAdjust="spacingAndGlyphs">M7</text>
<text x="986.5" y="409" fill="#000" stroke="#000" stroke-width="0.35" font-weight="bold" font-size="14.5" textLength="28.5" lengthAdjust="spacingAndGlyphs">300n</text>
<text x="1045" y="412.5" fill="#000" stroke="#000" stroke-width="0.35" font-weight="bold" font-size="14.5" textLength="13.5" lengthAdjust="spacingAndGlyphs">1u</text>
<path d="M739.5 296.5 L739.5 351.5" stroke="#000" stroke-width="3" fill="none" stroke-linecap="square" shape-rendering="crispEdges"/>
<path d="M739.5 351.5 L739.5 432.5" stroke="#808000" stroke-width="3" fill="none" stroke-linecap="square" shape-rendering="crispEdges"/>
<rect x="722" y="431" width="35" height="6" fill="#808000" shape-rendering="crispEdges"/>
<rect x="722" y="445" width="35" height="6" fill="#808000" shape-rendering="crispEdges"/>
<path d="M739.5 451.5 L739.5 489.5" stroke="#808000" stroke-width="3" fill="none" stroke-linecap="square" shape-rendering="crispEdges"/>
<path d="M739.5 489.5 L739.5 505.5" stroke="#000" stroke-width="3" fill="none" stroke-linecap="square" shape-rendering="crispEdges"/>
<text x="726" y="422" fill="#000" stroke="#000" stroke-width="0.35" font-weight="bold" font-size="14.5" textLength="7" lengthAdjust="spacingAndGlyphs">1</text>
<text x="716.5" y="470.5" fill="#0000FF" stroke="#0000FF" stroke-width="0.35" font-weight="bold" font-size="14.5" textLength="14" lengthAdjust="spacingAndGlyphs">C2</text>
<text x="722" y="532.5" fill="#008000" stroke="#008000" stroke-width="0.35" font-weight="bold" font-size="14.5" textLength="34.5" lengthAdjust="spacingAndGlyphs">AGnd</text>
<path d="M731.5 505.5 L749.5 505.5" stroke="#000" stroke-width="3" fill="none" stroke-linecap="square" shape-rendering="crispEdges"/>
<path d="M732.5 505.5 L737.5 514.5" stroke="#000" stroke-width="3" fill="none"/>
<path d="M740.5 505.5 L745.5 514.5" stroke="#000" stroke-width="3" fill="none"/>
<path d="M748.5 505.5 L753.5 514.5" stroke="#000" stroke-width="3" fill="none"/>
<rect x="774" y="295" width="3" height="3" fill="#fff" shape-rendering="crispEdges"/>
<rect x="774" y="296" width="4" height="1" fill="#000" shape-rendering="crispEdges"/>
<path d="M777 296.5 L796 290.5 L796 302.5 Z" fill="#000"/>
<path d="M816 296.5 Q804.5 296.5 804.5 308" stroke="#000" stroke-width="3" fill="none"/>
<path d="M804.5 308.5 L804.5 328.5" stroke="#000" stroke-width="3" fill="none" stroke-linecap="square" shape-rendering="crispEdges"/>
<path d="M795.5 328.5 L813.5 328.5" stroke="#000" stroke-width="3" fill="none" stroke-linecap="square" shape-rendering="crispEdges"/>
<path d="M796.5 328.5 L791.5 337.5" stroke="#000" stroke-width="3" fill="none"/>
<path d="M804.5 328.5 L799.5 337.5" stroke="#000" stroke-width="3" fill="none"/>
<path d="M812.5 328.5 L807.5 337.5" stroke="#000" stroke-width="3" fill="none"/>
<text x="785" y="317.5" fill="#0000FF" stroke="#0000FF" stroke-width="0.35" font-weight="bold" font-size="14.5" textLength="12.5" lengthAdjust="spacingAndGlyphs">F1</text>
<text x="811" y="317.5" fill="#000" stroke="#000" stroke-width="0.35" font-weight="bold" font-size="14.5" textLength="5" lengthAdjust="spacingAndGlyphs">1</text>
<rect x="774" y="390" width="3" height="3" fill="#fff" shape-rendering="crispEdges"/>
<rect x="774" y="391" width="4" height="1" fill="#000" shape-rendering="crispEdges"/>
<path d="M777 391.5 L796 385.5 L796 397.5 Z" fill="#000"/>
<path d="M816 391.5 Q804.5 391.5 804.5 403" stroke="#000" stroke-width="3" fill="none"/>
<path d="M804.5 403.5 L804.5 423.5" stroke="#000" stroke-width="3" fill="none" stroke-linecap="square" shape-rendering="crispEdges"/>
<path d="M795.5 423.5 L813.5 423.5" stroke="#000" stroke-width="3" fill="none" stroke-linecap="square" shape-rendering="crispEdges"/>
<path d="M796.5 423.5 L791.5 432.5" stroke="#000" stroke-width="3" fill="none"/>
<path d="M804.5 423.5 L799.5 432.5" stroke="#000" stroke-width="3" fill="none"/>
<path d="M812.5 423.5 L807.5 432.5" stroke="#000" stroke-width="3" fill="none"/>
<text x="785" y="412.5" fill="#0000FF" stroke="#0000FF" stroke-width="0.35" font-weight="bold" font-size="14.5" textLength="12.5" lengthAdjust="spacingAndGlyphs">F2</text>
<text x="811" y="412.5" fill="#000" stroke="#000" stroke-width="0.35" font-weight="bold" font-size="14.5" textLength="5" lengthAdjust="spacingAndGlyphs">1</text>
<path d="M491.5 531.5 L515.5 531.5 L515.5 497.5" stroke="#000" stroke-width="3" fill="none" stroke-linecap="square" shape-rendering="crispEdges"/>
<path d="M515.5 497.5 L515.5 497.5 Q515.5 489.5 523.5 489.5 L643.5 489.5" stroke="#000" stroke-width="3" fill="none"/>
<circle cx="611.5" cy="489.5" r="5" fill="#000"/>
<circle cx="643.5" cy="489.5" r="5" fill="#000"/>
<circle cx="643.5" cy="457.5" r="5" fill="#000"/>
<path d="M395.5 545.5 H411.5 L418.5 553.5 L411.5 561.5 H395.5 Z" fill="#D4D0C8" stroke="#000" stroke-width="3"/>
<path d="M398 553.5 L403.5 547.5 V550.5 H406.5 V547.5 L412 553.5 L406.5 559.5 V556.5 H403.5 V559.5 Z" fill="#000"/>
<text x="353" y="559" fill="#000" stroke="#000" stroke-width="0.35" font-weight="bold" font-size="14.5" textLength="31" lengthAdjust="spacingAndGlyphs">Rstxx</text>
<path d="M419.5 553.5 L474.5 553.5" stroke="#000" stroke-width="3" fill="none" stroke-linecap="square" shape-rendering="crispEdges"/>
<path d="M491.5 553.5 L825.5 553.5" stroke="#000" stroke-width="3" fill="none" stroke-linecap="square" shape-rendering="crispEdges"/>
<path d="M844.5 553.5 L1061.5 553.5" stroke="#000" stroke-width="3" fill="none" stroke-linecap="square" shape-rendering="crispEdges"/>
<rect x="483" y="517" width="8" height="72" fill="#000" shape-rendering="crispEdges"/>
<rect x="474" y="534" width="3" height="38" fill="#000" shape-rendering="crispEdges"/>
<path d="M491.5 531.5 L515.5 531.5" stroke="#000" stroke-width="3" fill="none" stroke-linecap="square" shape-rendering="crispEdges"/>
<path d="M491.5 571.5 L500.5 571.5" stroke="#000" stroke-width="3" fill="none" stroke-linecap="square" shape-rendering="crispEdges"/>
<path d="M500 564 L500 579 L516 571.5 Z" fill="#000"/>
<path d="M515.5 571.5 L515.5 662.5" stroke="#000" stroke-width="3" fill="none" stroke-linecap="square" shape-rendering="crispEdges"/>
<text x="438" y="542.5" fill="#000" stroke="#000" stroke-width="0.35" font-weight="bold" font-size="14.5" textLength="28" lengthAdjust="spacingAndGlyphs">220n</text>
<text x="495.5" y="546" fill="#000" stroke="#000" stroke-width="0.35" font-weight="bold" font-size="14.5" textLength="28" lengthAdjust="spacingAndGlyphs">800n</text>
<text x="454" y="582" fill="#0000FF" stroke="#0000FF" stroke-width="0.35" font-weight="bold" font-size="14.5" textLength="16" lengthAdjust="spacingAndGlyphs">M8</text>
<text x="489" y="601" fill="#FF0000" stroke="#FF0000" stroke-width="0.35" font-weight="bold" font-size="14.5" textLength="20" lengthAdjust="spacingAndGlyphs">800</text>
<circle cx="515.5" cy="617.5" r="5" fill="#000"/>
<path d="M515.5 617.5 L569.5 617.5" stroke="#000" stroke-width="3" fill="none" stroke-linecap="square" shape-rendering="crispEdges"/>
<rect x="579" y="581" width="8" height="72" fill="#000" shape-rendering="crispEdges"/>
<rect x="569" y="598" width="3" height="39" fill="#000" shape-rendering="crispEdges"/>
<path d="M587.5 595.5 L611.5 595.5" stroke="#000" stroke-width="3" fill="none" stroke-linecap="square" shape-rendering="crispEdges"/>
<path d="M587.5 635.5 L596.5 635.5" stroke="#000" stroke-width="3" fill="none" stroke-linecap="square" shape-rendering="crispEdges"/>
<path d="M596 628 L596 643 L612 635.5 Z" fill="#000"/>
<path d="M611.5 595.5 L611.5 489.5" stroke="#000" stroke-width="3" fill="none"/>
<path d="M611.5 635.5 L611.5 729.5" stroke="#000" stroke-width="3" fill="none" stroke-linecap="square" shape-rendering="crispEdges"/>
<text x="538" y="606.5" fill="#000" stroke="#000" stroke-width="0.35" font-weight="bold" font-size="14.5" textLength="24.5" lengthAdjust="spacingAndGlyphs">2.5u</text>
<text x="592" y="610.5" fill="#000" stroke="#000" stroke-width="0.35" font-weight="bold" font-size="14.5" textLength="28" lengthAdjust="spacingAndGlyphs">400n</text>
<text x="543" y="646" fill="#0000FF" stroke="#0000FF" stroke-width="0.35" font-weight="bold" font-size="14.5" textLength="23" lengthAdjust="spacingAndGlyphs">M10</text>
<text x="585" y="664.5" fill="#FF0000" stroke="#FF0000" stroke-width="0.35" font-weight="bold" font-size="14.5" textLength="20" lengthAdjust="spacingAndGlyphs">800</text>
<rect x="496" y="662" width="39" height="6" fill="#000" shape-rendering="crispEdges"/>
<path d="M515.5 669 L500 697.5 L531 697.5 Z" fill="#fff" stroke="#000" stroke-width="3" stroke-linejoin="miter"/>
<path d="M515.5 699.5 L515.5 713.5" stroke="#000" stroke-width="3" fill="none" stroke-linecap="square" shape-rendering="crispEdges"/>
<path d="M507.5 713.5 L525.5 713.5" stroke="#000" stroke-width="3" fill="none" stroke-linecap="square" shape-rendering="crispEdges"/>
<path d="M508.5 713.5 L513.5 722.5" stroke="#000" stroke-width="3" fill="none"/>
<path d="M516.5 713.5 L521.5 722.5" stroke="#000" stroke-width="3" fill="none"/>
<path d="M524.5 713.5 L529.5 722.5" stroke="#000" stroke-width="3" fill="none"/>
<path d="M482 665 L495 677" stroke="#000" stroke-width="2.5" fill="none"/>
<path d="M499 681 L489 677 L495 671 Z" fill="#000"/>
<text x="533" y="686.5" fill="#0000FF" stroke="#0000FF" stroke-width="0.35" font-weight="bold" font-size="14.5" textLength="14" lengthAdjust="spacingAndGlyphs">D1</text>
<text x="453" y="696.5" fill="#000" stroke="#000" stroke-width="0.35" font-weight="bold" font-size="14.5" textLength="36" lengthAdjust="spacingAndGlyphs">V=2.76</text>
<rect x="706" y="551" width="5" height="5" fill="#fff" shape-rendering="crispEdges"/>
<rect x="706" y="553" width="5" height="1" fill="#000" shape-rendering="crispEdges"/>
<path d="M710 553.5 L732 547.5 L732 559.5 Z" fill="#000"/>
<path d="M752 553.5 Q740.5 553.5 740.5 565" stroke="#000" stroke-width="3" fill="none"/>
<path d="M740.5 565.5 L740.5 585.5" stroke="#000" stroke-width="3" fill="none" stroke-linecap="square" shape-rendering="crispEdges"/>
<path d="M731.5 585.5 L749.5 585.5" stroke="#000" stroke-width="3" fill="none" stroke-linecap="square" shape-rendering="crispEdges"/>
<path d="M732.5 585.5 L727.5 594.5" stroke="#000" stroke-width="3" fill="none"/>
<path d="M740.5 585.5 L735.5 594.5" stroke="#000" stroke-width="3" fill="none"/>
<path d="M748.5 585.5 L743.5 594.5" stroke="#000" stroke-width="3" fill="none"/>
<text x="720.5" y="574" fill="#0000FF" stroke="#0000FF" stroke-width="0.35" font-weight="bold" font-size="14.5" textLength="14" lengthAdjust="spacingAndGlyphs">F3</text>
<text x="745.5" y="574" fill="#000" stroke="#000" stroke-width="0.35" font-weight="bold" font-size="14.5" textLength="20.5" lengthAdjust="spacingAndGlyphs">800</text>
<rect x="642" y="645" width="3" height="4" fill="#fff" shape-rendering="crispEdges"/>
<rect x="643" y="645" width="1" height="4" fill="#000" shape-rendering="crispEdges"/>
<path d="M637 624.5 L650 624.5 L643.5 645 Z" fill="#000"/>
<path d="M643.5 605 Q643.5 617.5 656 617.5" stroke="#000" stroke-width="3" fill="none"/>
<path d="M656.5 617.5 L676.5 617.5" stroke="#000" stroke-width="3" fill="none" stroke-linecap="square" shape-rendering="crispEdges"/>
<path d="M676.5 609.5 L676.5 626.5" stroke="#000" stroke-width="3" fill="none" stroke-linecap="square" shape-rendering="crispEdges"/>
<path d="M676.5 610.5 L685 615.0" stroke="#000" stroke-width="3" fill="none"/>
<path d="M676.5 618.5 L685 623.0" stroke="#000" stroke-width="3" fill="none"/>
<path d="M676.5 626.5 L685 631.0" stroke="#000" stroke-width="3" fill="none"/>
<text x="652.5" y="604" fill="#000" stroke="#000" stroke-width="0.35" font-weight="bold" font-size="14.5" textLength="20.5" lengthAdjust="spacingAndGlyphs">600</text>
<text x="652.5" y="636.5" fill="#0000FF" stroke="#0000FF" stroke-width="0.35" font-weight="bold" font-size="14.5" textLength="13.5" lengthAdjust="spacingAndGlyphs">F4</text>
<rect x="836" y="517" width="8" height="72" fill="#000" shape-rendering="crispEdges"/>
<rect x="825" y="535" width="3" height="37" fill="#000" shape-rendering="crispEdges"/>
<path d="M844.5 531.5 L868.5 531.5" stroke="#000" stroke-width="3" fill="none" stroke-linecap="square" shape-rendering="crispEdges"/>
<path d="M844.5 571.5 L853.5 571.5" stroke="#000" stroke-width="3" fill="none" stroke-linecap="square" shape-rendering="crispEdges"/>
<path d="M853 564 L853 579 L869 571.5 Z" fill="#000"/>
<path d="M844.5 531.5 L868.5 531.5 L868.5 497.5" stroke="#000" stroke-width="3" fill="none" stroke-linecap="square" shape-rendering="crispEdges"/>
<path d="M868.5 497.5 L868.5 497.5 Q868.5 489.5 876.5 489.5 L1061.5 489.5" stroke="#000" stroke-width="3" fill="none"/>
<path d="M868.5 571.5 L868.5 662.5" stroke="#000" stroke-width="3" fill="none" stroke-linecap="square" shape-rendering="crispEdges"/>
<circle cx="964.5" cy="489.5" r="5" fill="#000"/>
<circle cx="996.5" cy="489.5" r="5" fill="#000"/>
<text x="790" y="542" fill="#000" stroke="#000" stroke-width="0.35" font-weight="bold" font-size="14.5" textLength="28" lengthAdjust="spacingAndGlyphs">220n</text>
<text x="848.5" y="546" fill="#000" stroke="#000" stroke-width="0.35" font-weight="bold" font-size="14.5" textLength="28.5" lengthAdjust="spacingAndGlyphs">800n</text>
<text x="806" y="582" fill="#0000FF" stroke="#0000FF" stroke-width="0.35" font-weight="bold" font-size="14.5" textLength="16" lengthAdjust="spacingAndGlyphs">M9</text>
<path d="M923.5 617.5 L779.5 617.5 Q771.5 617.5 771.5 625.5 L771.5 634.5" stroke="#000" stroke-width="3" fill="none"/>
<path d="M771.5 634.5 L771.5 650.5" stroke="#808000" stroke-width="3" fill="none" stroke-linecap="square" shape-rendering="crispEdges"/>
<rect x="753" y="648" width="37" height="6" rx="3" fill="#808000"/>
<rect x="759" y="659" width="25" height="6" rx="3" fill="#808000"/>
<path d="M771.5 665.5 L771.5 688.5" stroke="#808000" stroke-width="3" fill="none" stroke-linecap="square" shape-rendering="crispEdges"/>
<path d="M771.5 688.5 L771.5 714.5" stroke="#000" stroke-width="3" fill="none" stroke-linecap="square" shape-rendering="crispEdges"/>
<path d="M763.5 714.5 L781.5 714.5" stroke="#000" stroke-width="3" fill="none" stroke-linecap="square" shape-rendering="crispEdges"/>
<path d="M764.5 714.5 L769.5 723.5" stroke="#000" stroke-width="3" fill="none"/>
<path d="M772.5 714.5 L777.5 723.5" stroke="#000" stroke-width="3" fill="none"/>
<path d="M780.5 714.5 L785.5 723.5" stroke="#000" stroke-width="3" fill="none"/>
<text x="731" y="683" fill="#000" stroke="#000" stroke-width="0.35" font-weight="bold" font-size="14.5" textLength="36" lengthAdjust="spacingAndGlyphs">2 AC 1</text>
<text x="780" y="684" fill="#0000FF" stroke="#0000FF" stroke-width="0.35" font-weight="bold" font-size="14.5" textLength="12.5" lengthAdjust="spacingAndGlyphs">V1</text>
<circle cx="868.5" cy="617.5" r="5" fill="#000"/>
<rect x="929" y="582" width="6" height="72" fill="#000" shape-rendering="crispEdges"/>
<rect x="923" y="598" width="2" height="39" fill="#000" shape-rendering="crispEdges"/>
<path d="M935.5 595.5 L964.5 595.5" stroke="#000" stroke-width="3" fill="none" stroke-linecap="square" shape-rendering="crispEdges"/>
<path d="M935.5 635.5 L948.5 635.5" stroke="#000" stroke-width="3" fill="none" stroke-linecap="square" shape-rendering="crispEdges"/>
<path d="M948 628 L948 643 L965 635.5 Z" fill="#000"/>
<path d="M964.5 595.5 L964.5 489.5" stroke="#000" stroke-width="3" fill="none" stroke-linecap="square" shape-rendering="crispEdges"/>
<path d="M964.5 635.5 L964.5 729.5" stroke="#000" stroke-width="3" fill="none" stroke-linecap="square" shape-rendering="crispEdges"/>
<text x="891" y="606.5" fill="#000" stroke="#000" stroke-width="0.35" font-weight="bold" font-size="14.5" textLength="24" lengthAdjust="spacingAndGlyphs">2.5u</text>
<text x="942" y="610.5" fill="#000" stroke="#000" stroke-width="0.35" font-weight="bold" font-size="14.5" textLength="27" lengthAdjust="spacingAndGlyphs">700n</text>
<text x="896" y="646.5" fill="#0000FF" stroke="#0000FF" stroke-width="0.35" font-weight="bold" font-size="14.5" textLength="22" lengthAdjust="spacingAndGlyphs">M16</text>
<rect x="849" y="662" width="39" height="6" fill="#000" shape-rendering="crispEdges"/>
<path d="M868.5 669 L853 697.5 L884 697.5 Z" fill="#fff" stroke="#000" stroke-width="3" stroke-linejoin="miter"/>
<path d="M868.5 699.5 L868.5 713.5" stroke="#000" stroke-width="3" fill="none" stroke-linecap="square" shape-rendering="crispEdges"/>
<path d="M860.5 713.5 L878.5 713.5" stroke="#000" stroke-width="3" fill="none" stroke-linecap="square" shape-rendering="crispEdges"/>
<path d="M861.5 713.5 L866.5 722.5" stroke="#000" stroke-width="3" fill="none"/>
<path d="M869.5 713.5 L874.5 722.5" stroke="#000" stroke-width="3" fill="none"/>
<path d="M877.5 713.5 L882.5 722.5" stroke="#000" stroke-width="3" fill="none"/>
<path d="M835 665 L848 677" stroke="#000" stroke-width="2.5" fill="none"/>
<path d="M852 681 L842 677 L848 671 Z" fill="#000"/>
<text x="886" y="686.5" fill="#0000FF" stroke="#0000FF" stroke-width="0.35" font-weight="bold" font-size="14.5" textLength="14" lengthAdjust="spacingAndGlyphs">D2</text>
<text x="813" y="696.5" fill="#000" stroke="#000" stroke-width="0.35" font-weight="bold" font-size="14.5" textLength="30" lengthAdjust="spacingAndGlyphs">V=1.8</text>
<path d="M996.5 489.5 L996.5 729.5" stroke="#000" stroke-width="3" fill="none" stroke-linecap="square" shape-rendering="crispEdges"/>
<rect x="995" y="645" width="3" height="4" fill="#fff" shape-rendering="crispEdges"/>
<rect x="996" y="645" width="1" height="4" fill="#000" shape-rendering="crispEdges"/>
<path d="M990 624.5 L1003 624.5 L996.5 645 Z" fill="#000"/>
<path d="M996.5 605 Q996.5 617.5 1009 617.5" stroke="#000" stroke-width="3" fill="none"/>
<path d="M1009.5 617.5 L1028.5 617.5" stroke="#000" stroke-width="3" fill="none" stroke-linecap="square" shape-rendering="crispEdges"/>
<path d="M1028.5 609.5 L1028.5 626.5" stroke="#000" stroke-width="3" fill="none" stroke-linecap="square" shape-rendering="crispEdges"/>
<path d="M1028.5 610.5 L1037 615.0" stroke="#000" stroke-width="3" fill="none"/>
<path d="M1028.5 618.5 L1037 623.0" stroke="#000" stroke-width="3" fill="none"/>
<path d="M1028.5 626.5 L1037 631.0" stroke="#000" stroke-width="3" fill="none"/>
<text x="1006" y="604.5" fill="#000" stroke="#000" stroke-width="0.35" font-weight="bold" font-size="14.5" textLength="20" lengthAdjust="spacingAndGlyphs">600</text>
<text x="1006" y="636.5" fill="#0000FF" stroke="#0000FF" stroke-width="0.35" font-weight="bold" font-size="14.5" textLength="13" lengthAdjust="spacingAndGlyphs">F5</text>
<rect x="636" y="352" width="79" height="79" fill="none" stroke="#FF0000" stroke-width="3" shape-rendering="crispEdges"/>
<rect x="642" y="351" width="3" height="2" fill="#00FFFF" shape-rendering="crispEdges"/>
<rect x="642" y="430" width="3" height="2" fill="#00FFFF" shape-rendering="crispEdges"/>
<rect x="714" y="390" width="3" height="2" fill="#00FFFF" shape-rendering="crispEdges"/>
<rect x="635" y="399" width="2" height="10" fill="#00FFFF" shape-rendering="crispEdges"/>
<clipPath id="c16"><rect x="630" y="350.5" width="60" height="3"/></clipPath>
<text x="646" y="354.5" fill="#fff" font-weight="bold" font-size="14.5" textLength="26" lengthAdjust="spacingAndGlyphs" clip-path="url(#c16)">1600</text></g></svg>
<div class="a" style="left:4px;top:736px;width:653px;height:19px;box-shadow:inset 1px 1px #808080,inset -1px -1px #fff;"></div>
<div class="a" style="left:659px;top:736px;width:350px;height:19px;box-shadow:inset 1px 1px #808080,inset -1px -1px #fff;"></div><div class="t" style="left:661px;top:740px;font-size:11px;">/Select Region</div>
<div class="a" style="left:1011px;top:736px;width:23px;height:19px;box-shadow:inset 1px 1px #808080,inset -1px -1px #fff;"></div><div class="t" style="left:1014px;top:740px;font-size:11px;">0</div>
<div class="a" style="left:1036px;top:737px;width:30px;height:5px;border:1px solid #000;background:#fff;"></div>
<svg class="a" style="left:1052px;top:741px" width="14" height="14"><path d="M13 1L1 13M13 5L5 13M13 9L9 13" stroke="#808080" stroke-width="1.5"/><path d="M13 2L2 13M13 6L6 13M13 10L10 13" stroke="#fff" stroke-width="0.8"/></svg>
</body></html>
